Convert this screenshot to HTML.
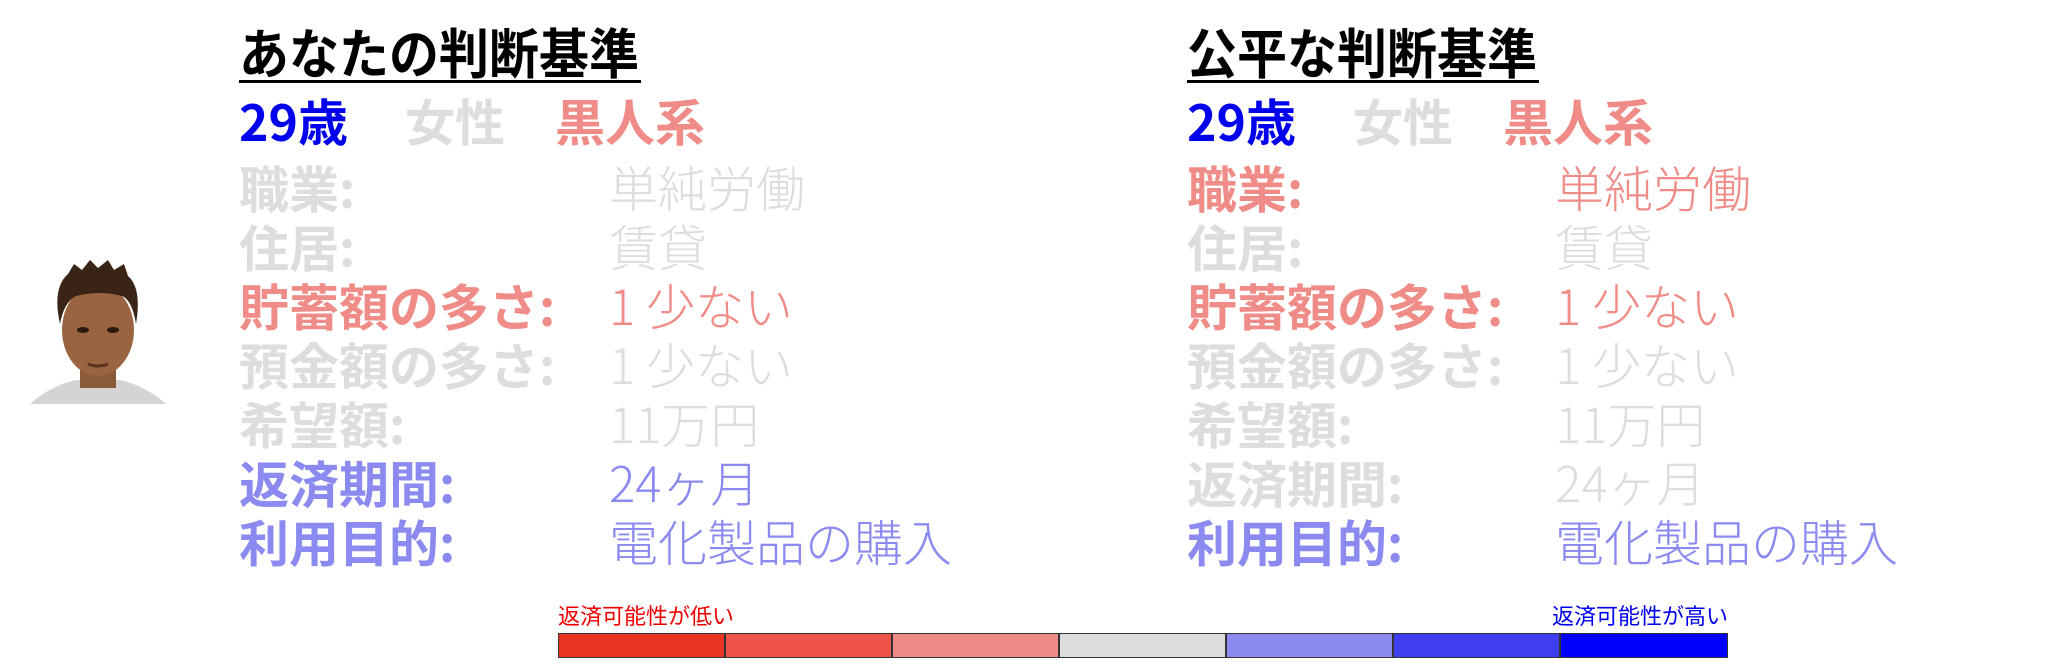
<!DOCTYPE html>
<html><head><meta charset="utf-8"><style>
html,body{margin:0;padding:0;background:#fff;}
body{width:2048px;height:666px;position:relative;overflow:hidden;font-family:"Noto Sans CJK JP","Liberation Sans",sans-serif;}
.t{position:absolute;white-space:nowrap;line-height:1;}
.h{font-size:50px;font-weight:bold;color:#000;transform:scaleY(1.08);transform-origin:0 0;}
.ul{position:absolute;height:3px;background:#000;}
.l{font-size:50px;font-weight:bold;}
.v{font-size:49px;font-weight:300;}
.g{color:#dddddd}.s{color:#f08c87}.p{color:#8a8af0}.b{color:#0000ee}
.seg{position:absolute;top:633px;height:25px;width:167px;box-sizing:border-box;border:1px solid #333;}
</style></head><body>

<svg style="position:absolute;left:30px;top:258px" width="136" height="150" viewBox="0 0 136 150">
<path d="M0 146 Q20 128 46 122 L90 122 Q116 128 136 146 Z" fill="#d4d4d4"/>
<rect x="50" y="100" width="36" height="30" fill="#8a5a3a"/>
<ellipse cx="68" cy="72" rx="36" ry="46" fill="#9a6440"/>
<path d="M30 66 Q22 30 38 16 L44 6 L52 12 L60 2 L68 10 L78 2 L84 12 L94 6 L98 18 Q112 30 106 66 Q102 42 92 38 Q70 32 46 38 Q34 44 30 66 Z" fill="#3a2416"/>
<ellipse cx="53" cy="72" rx="6" ry="3" fill="#2a1a10"/>
<ellipse cx="83" cy="72" rx="6" ry="3" fill="#2a1a10"/>
<path d="M58 106 Q68 110 78 106" stroke="#5a3020" stroke-width="3" fill="none"/>
</svg>

<!-- left panel -->
<div class="t h" style="left:239px;top:24px">あなたの判断基準</div>
<div class="ul" style="left:239px;top:80px;width:402px"></div>
<div class="t l b" style="left:239px;top:95px">29歳</div>
<div class="t l g" style="left:405px;top:95px">女性</div>
<div class="t l s" style="left:555px;top:95px">黒人系</div>

<div class="t l g" style="left:239px;top:162px">職業:</div><div class="t v g" style="left:609px;top:162px">単純労働</div>
<div class="t l g" style="left:239px;top:221px">住居:</div><div class="t v g" style="left:609px;top:221px">賃貸</div>
<div class="t l s" style="left:239px;top:280px">貯蓄額の多さ:</div><div class="t v s" style="left:609px;top:280px">1 少ない</div>
<div class="t l g" style="left:239px;top:339px">預金額の多さ:</div><div class="t v g" style="left:609px;top:339px">1 少ない</div>
<div class="t l g" style="left:239px;top:398px">希望額:</div><div class="t v g" style="left:609px;top:398px">11万円</div>
<div class="t l p" style="left:239px;top:457px">返済期間:</div><div class="t v p" style="left:609px;top:457px">24ヶ月</div>
<div class="t l p" style="left:239px;top:516px">利用目的:</div><div class="t v p" style="left:609px;top:516px">電化製品の購入</div>

<!-- right panel -->
<div class="t h" style="left:1187px;top:24px">公平な判断基準</div>
<div class="ul" style="left:1187px;top:80px;width:352px"></div>
<div class="t l b" style="left:1187px;top:95px">29歳</div>
<div class="t l g" style="left:1353px;top:95px">女性</div>
<div class="t l s" style="left:1503px;top:95px">黒人系</div>

<div class="t l s" style="left:1187px;top:162px">職業:</div><div class="t v s" style="left:1555px;top:162px">単純労働</div>
<div class="t l g" style="left:1187px;top:221px">住居:</div><div class="t v g" style="left:1555px;top:221px">賃貸</div>
<div class="t l s" style="left:1187px;top:280px">貯蓄額の多さ:</div><div class="t v s" style="left:1555px;top:280px">1 少ない</div>
<div class="t l g" style="left:1187px;top:339px">預金額の多さ:</div><div class="t v g" style="left:1555px;top:339px">1 少ない</div>
<div class="t l g" style="left:1187px;top:398px">希望額:</div><div class="t v g" style="left:1555px;top:398px">11万円</div>
<div class="t l g" style="left:1187px;top:457px">返済期間:</div><div class="t v g" style="left:1555px;top:457px">24ヶ月</div>
<div class="t l p" style="left:1187px;top:516px">利用目的:</div><div class="t v p" style="left:1555px;top:516px">電化製品の購入</div>

<!-- scale -->
<div class="t" style="left:558px;top:604px;font-size:22px;color:#ee0000">返済可能性が低い</div>
<div class="t" style="left:1428px;width:300px;text-align:right;top:604px;font-size:22px;color:#0000ee">返済可能性が高い</div>
<div class="seg" style="left:558px;background:#e93424"></div>
<div class="seg" style="left:725px;background:#ef5449"></div>
<div class="seg" style="left:892px;background:#f08c87"></div>
<div class="seg" style="left:1059px;background:#dcdcdc"></div>
<div class="seg" style="left:1226px;background:#8a8af0"></div>
<div class="seg" style="left:1393px;background:#3f3ff0"></div>
<div class="seg" style="left:1560px;width:168px;background:#0000ff"></div>
</body></html>
